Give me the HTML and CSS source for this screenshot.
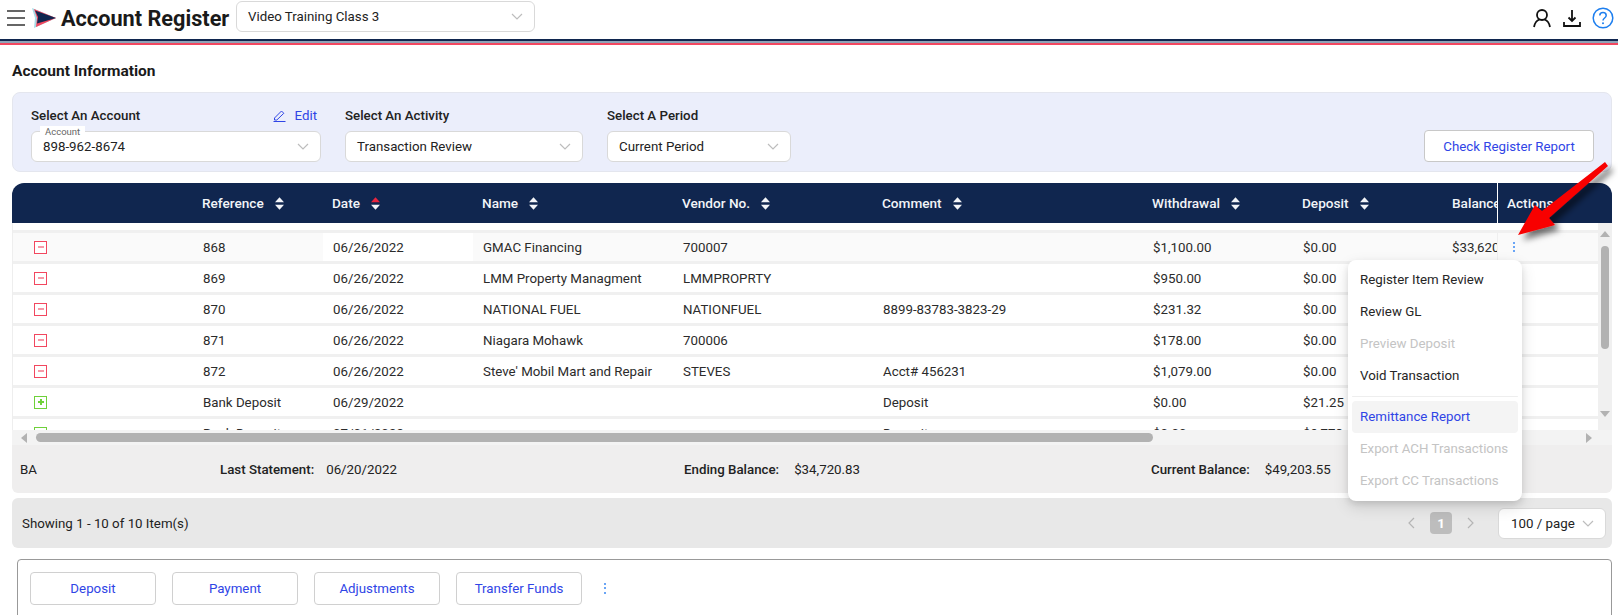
FILE: index.html
```html
<!DOCTYPE html>
<html lang="en">
<head>
<meta charset="utf-8">
<title>Account Register</title>
<link rel="stylesheet" href="styles.css">
</head>
<body>
<header class="topbar">
  <div class="burger"><span></span><span></span><span></span></div>
  <svg class="logo" viewBox="0 0 24 20" width="24" height="20">
    <path d="M0 0 L24 10 L2 20 L3 10 Z" fill="#a6dbe6"/>
    <path d="M2 1 L24 10 L4 19 L5 10 Z" fill="#f2475f"/>
    <path d="M3 2.500 L24 10 L5 15.500 L6 9 Z" fill="#10264f"/>
  </svg>
  <h1 class="title">Account Register</h1>
  <div class="select top-select"><span>Video Training Class 3</span><svg class="chev" viewBox="0 0 12 7"><path d="M1 1 L6 6 L11 1"/></svg></div>
  <div class="top-icons">
    <svg width="20" height="20" viewBox="0 0 20 20" class="ico-black"><circle cx="10" cy="7" r="5"/><path d="M2 19 C3 14 6 12 7.500 11.500 M18 19 C17 14 14 12 12.500 11.500"/></svg>
    <svg width="20" height="20" viewBox="0 0 20 20" class="ico-black"><path d="M10 2 V12 M6.500 9.500 L10 13 L13.500 9.500 M2 14 V18 H18 V14"/></svg>
    <svg width="22" height="22" viewBox="0 0 22 22" class="ico-help"><circle cx="11" cy="11" r="9.800"/><path d="M7.800 8.500 C7.800 4.500 14.200 4.500 14.200 8.500 C14.200 11 11 11 11 13.500"/><circle class="dot" cx="11" cy="16.300" r="1"/></svg>
  </div>
</header>
<div class="stripes"><i class="s1"></i><i class="s2"></i><i class="s3"></i></div>

<main class="page">
  <h2 class="section">Account Information</h2>

  <section class="filters">
    <div class="field f-account">
      <div class="lab-row"><label>Select An Account</label><a class="edit"><svg width="13" height="13" viewBox="0 0 13 13"><path d="M1.500 9 L8.500 2 L10.800 4.300 L3.800 11 H1.500 Z M0.500 12.500 H12.500"/></svg>Edit</a></div>
      <div class="select floated"><em>Account</em><span>898-962-8674</span><svg class="chev" viewBox="0 0 12 7"><path d="M1 1 L6 6 L11 1"/></svg></div>
    </div>
    <div class="field f-activity">
      <div class="lab-row"><label>Select An Activity</label></div>
      <div class="select"><span>Transaction Review</span><svg class="chev" viewBox="0 0 12 7"><path d="M1 1 L6 6 L11 1"/></svg></div>
    </div>
    <div class="field f-period">
      <div class="lab-row"><label>Select A Period</label></div>
      <div class="select"><span>Current Period</span><svg class="chev" viewBox="0 0 12 7"><path d="M1 1 L6 6 L11 1"/></svg></div>
    </div>
    <button class="btn report">Check Register Report</button>
  </section>

  <section class="table">
    <div class="thead cols">
      <div></div>
      <div class="th">Reference <svg class="sort" viewBox="0 0 10 14"><path d="M5 0 L10 5.500 H0 Z"/><path d="M5 14 L10 8.500 H0 Z"/></svg></div>
      <div class="th">Date <svg class="sort" viewBox="0 0 10 14"><path class="on" d="M5 0 L10 5.500 H0 Z"/><path d="M5 14 L10 8.500 H0 Z"/></svg></div>
      <div class="th">Name <svg class="sort" viewBox="0 0 10 14"><path d="M5 0 L10 5.500 H0 Z"/><path d="M5 14 L10 8.500 H0 Z"/></svg></div>
      <div class="th">Vendor No. <svg class="sort" viewBox="0 0 10 14"><path d="M5 0 L10 5.500 H0 Z"/><path d="M5 14 L10 8.500 H0 Z"/></svg></div>
      <div class="th">Comment <svg class="sort" viewBox="0 0 10 14"><path d="M5 0 L10 5.500 H0 Z"/><path d="M5 14 L10 8.500 H0 Z"/></svg></div>
      <div class="th">Withdrawal <svg class="sort" viewBox="0 0 10 14"><path d="M5 0 L10 5.500 H0 Z"/><path d="M5 14 L10 8.500 H0 Z"/></svg></div>
      <div class="th">Deposit <svg class="sort" viewBox="0 0 10 14"><path d="M5 0 L10 5.500 H0 Z"/><path d="M5 14 L10 8.500 H0 Z"/></svg></div>
      <div class="th clip">Balance</div>
      <div class="th act">Actions</div>
    </div>
    <div class="tbody-wrap">
      <div class="tbody">
        <div class="row cols hover">
          <div class="c-ico"><i class="flag minus"></i></div><div>868</div><div class="sorted">06/26/2022</div><div>GMAC Financing</div><div>700007</div><div></div><div>$1,100.00</div><div>$0.00</div><div class="clip">$33,620.55</div><div class="act"><span class="dots"><b></b><b></b><b></b></span></div>
        </div>
        <div class="row cols">
          <div class="c-ico"><i class="flag minus"></i></div><div>869</div><div>06/26/2022</div><div>LMM Property Managment</div><div>LMMPROPRTY</div><div></div><div>$950.00</div><div>$0.00</div><div class="act-filler"></div><div class="act"></div>
        </div>
        <div class="row cols">
          <div class="c-ico"><i class="flag minus"></i></div><div>870</div><div>06/26/2022</div><div>NATIONAL FUEL</div><div>NATIONFUEL</div><div>8899-83783-3823-29</div><div>$231.32</div><div>$0.00</div><div class="act-filler"></div><div class="act"></div>
        </div>
        <div class="row cols">
          <div class="c-ico"><i class="flag minus"></i></div><div>871</div><div>06/26/2022</div><div>Niagara Mohawk</div><div>700006</div><div></div><div>$178.00</div><div>$0.00</div><div class="act-filler"></div><div class="act"></div>
        </div>
        <div class="row cols">
          <div class="c-ico"><i class="flag minus"></i></div><div>872</div><div>06/26/2022</div><div>Steve' Mobil Mart and Repair</div><div>STEVES</div><div>Acct# 456231</div><div>$1,079.00</div><div>$0.00</div><div class="act-filler"></div><div class="act"></div>
        </div>
        <div class="row cols">
          <div class="c-ico"><i class="flag plus"></i></div><div>Bank Deposit</div><div>06/29/2022</div><div></div><div></div><div>Deposit</div><div>$0.00</div><div>$21.25</div><div class="act-filler"></div><div class="act"></div>
        </div>
        <div class="row cols">
          <div class="c-ico"><i class="flag plus"></i></div><div>Bank Deposit</div><div>07/01/2022</div><div></div><div></div><div>Deposit</div><div>$0.00</div><div>$9,773</div><div class="act-filler"></div><div class="act"></div>
        </div>
      </div>
      <div class="vscroll">
        <i class="arr up"></i>
        <i class="vthumb"></i>
        <i class="arr down"></i>
      </div>
    </div>
    <div class="hscroll">
      <i class="arr left"></i>
      <i class="hthumb"></i>
      <i class="arr right"></i>
    </div>
  </section>

  <section class="summary">
    <div class="s-ba">BA</div>
    <div class="s-last"><b>Last Statement:</b>06/20/2022</div>
    <div class="s-end"><b>Ending Balance:</b>$34,720.83</div>
    <div class="s-cur"><b>Current Balance:</b>$49,203.55</div>
  </section>

  <section class="pager">
    <span>Showing 1 - 10 of 10 Item(s)</span>
    <div class="pages">
      <svg class="pg" viewBox="0 0 7 12"><path d="M6 1 L1 6 L6 11"/></svg>
      <b class="cur">1</b>
      <svg class="pg" viewBox="0 0 7 12"><path d="M1 1 L6 6 L1 11"/></svg>
      <div class="select per"><span>100 / page</span><svg class="chev" viewBox="0 0 12 7"><path d="M1 1 L6 6 L11 1"/></svg></div>
    </div>
  </section>

  <section class="actions-box">
    <button class="btn act-btn">Deposit</button>
    <button class="btn act-btn">Payment</button>
    <button class="btn act-btn">Adjustments</button>
    <button class="btn act-btn">Transfer Funds</button>
    <span class="dots wide"><b></b><b></b><b></b></span>
  </section>
</main>

<ul class="menu">
  <li>Register Item Review</li>
  <li>Review GL</li>
  <li class="off">Preview Deposit</li>
  <li>Void Transaction</li>
  <li class="sep"></li>
  <li class="active">Remittance Report</li>
  <li class="off">Export ACH Transactions</li>
  <li class="off">Export CC Transactions</li>
</ul>

<svg class="callout" width="110" height="95" viewBox="0 0 110 95">
  <defs><filter id="sh" x="-20%" y="-20%" width="150%" height="150%"><feDropShadow dx="5" dy="5" stdDeviation="3" flood-color="#000" flood-opacity=".55"/></filter></defs>
  <path filter="url(#sh)" fill="#f80000" d="M92 5 L95 9 L36 61 L42 68 L5 78 L22 48 L29 54 Z"/>
</svg>
</body>
</html>
```
FILE: styles.css
```css
* { box-sizing: border-box; }
html, body { margin: 0; padding: 0; }
body {
  position: relative;
  width: 1618px;
  height: 615px;
  overflow: hidden;
  background: #fff;
  color: #222;
  font-family: Roboto, "Open Sans", sans-serif;
  font-size: 13.3px;
}
svg { display: block; flex: none; }

.topbar {
  display: flex;
  align-items: center;
  height: 39px;
  padding: 0 4px 3px 7px;
}
.burger { display: flex; flex-direction: column; gap: 5px; width: 18px; margin-right: 7px; }
.burger span { display: block; height: 2px; background: #666; }
.logo { margin-right: 5px; }
.title { margin: 0 7px 0 0; font-size: 21.700px; font-weight: 700; color: #1a1a1a; white-space: nowrap; width: 168px; }
.top-select { width: 299px; height: 31px; margin-top: -3px; padding: 0 12px; }
.top-icons { display: flex; align-items: center; gap: 10px; margin-left: auto; }
.ico-black { fill: none; stroke: #111; stroke-width: 1.800; }
.ico-help { fill: none; stroke: #1e7fef; stroke-width: 1.500; }
.ico-help .dot { fill: #1e7fef; stroke: none; }

.stripes { display: flex; flex-direction: column; }
.stripes i { display: block; height: 2px; }
.s1 { background: #10264f; }
.s2 { background: #8fa4b8; }
.s3 { background: #f2475f; }

.page { padding: 0 6px 0 12px; }
.section { margin: 16px 0 11px; font-size: 15.500px; font-weight: 700; color: #1a1a1a; line-height: 20px; }

.select {
  position: relative;
  display: flex;
  align-items: center;
  justify-content: space-between;
  height: 31px;
  padding: 0 11px;
  background: #fff;
  border: 1px solid #d9d9d9;
  border-radius: 6px;
}
.chev { width: 12px; height: 7px; fill: none; stroke: #bdbdbd; stroke-width: 1.200; }
.floated em {
  position: absolute;
  left: 8px;
  top: -6px;
  padding: 0 5px;
  background: #fff;
  font-style: normal;
  font-size: 9.500px;
  line-height: 11px;
  color: #666;
}

.filters {
  display: flex;
  align-items: flex-start;
  height: 80px;
  padding: 12px 17px 0 18px;
  background: #ebeefb;
  border: 1px solid #e4e6ee;
  border-radius: 8px;
}
.lab-row { display: flex; justify-content: space-between; align-items: center; height: 20px; margin-bottom: 6px; }
.lab-row label { font-weight: 500; color: #222; }
.edit { display: flex; align-items: center; gap: 8px; color: #2f45e6; padding-right: 4px; }
.edit svg { fill: none; stroke: #2f45e6; stroke-width: 1; }
.f-account { width: 290px; margin-right: 24px; }
.f-activity { width: 238px; margin-right: 24px; }
.f-period { width: 184px; }
.btn {
  font: inherit;
  color: #2f45e6;
  background: #fff;
  border: 1px solid #c8c8c8;
  border-radius: 4px;
  cursor: pointer;
}
.report { width: 170px; height: 32px; margin: 25px 0 0 auto; }

.cols {
  display: grid;
  grid-template-columns: 181px 130px 150px 200px 200px 270px 150px 149px 55px 1fr;
}
.table { margin-top: 11px; }
.thead {
  height: 40px;
  align-items: stretch;
  background: #10264f;
  border-radius: 12px 12px 0 0;
  color: #f2f4f8;
  font-size: 13.600px;
  font-weight: 500;
}
.th { display: flex; align-items: center; gap: 11px; padding-left: 9px; white-space: nowrap; }
.thead .clip { overflow: hidden; padding-left: 10px; }
.thead .act { border-left: 1px solid #fff; padding-left: 9px; }
.sort { width: 9px; height: 13px; fill: #f2f4f8; }
.sort .on { fill: #e8263f; }

.tbody-wrap { display: flex; height: 207px; background: #f0f0f0; border-left: 1px solid #eee; }
.tbody { flex: 1; min-width: 0; overflow: hidden; display: flex; flex-direction: column; gap: 3px; padding-top: 10px; background: #f0f0f0; box-shadow: inset 0 7px 0 #fff; }
.row { flex: none; height: 28px; align-items: stretch; background: #fff; grid-template-columns: 180px 130px 150px 200px 200px 270px 150px 149px 55px 1fr; }
.row > div { display: flex; align-items: center; padding-left: 10px; white-space: nowrap; color: #2b2b2b; }
.row .clip { overflow: hidden; }
.hover { background: #fafafa; }
.row .sorted { background: #fff; }
.row .c-ico { padding-left: 21px; }
.flag {
  position: relative;
  display: block;
  width: 13px;
  height: 13px;
  border: 1px solid;
  background: #fff;
  box-shadow: 0 0 0 .5px rgba(255,255,255,.5);
}
.flag::before { content: ""; position: absolute; left: 2.500px; right: 2.500px; top: 4.500px; height: 2px; }
.minus { border-color: #f2475f; }
.minus::before { background: #f79aa8; }
.plus { border-color: #6fd13a; }
.plus::before { background: #6fd13a; }
.plus::after { content: ""; position: absolute; top: 2.500px; bottom: 2.500px; left: 4.500px; width: 2px; background: #6fd13a; }

.row .act { position: relative; border-left: 1px solid #efefef; padding-left: 15px; }
.dots { display: inline-flex; flex-direction: column; gap: 2px; width: 2px; }
.dots b { display: block; width: 2px; height: 2px; background: #6aa5f5; }
.dots.wide { margin-left: 6px; gap: 2.500px; }

.vscroll { position: relative; flex: none; width: 14px; background: #f0f0f0; display: flex; flex-direction: column; align-items: center; padding-top: 8px; }
.vthumb { display: block; width: 8px; height: 103px; margin-top: 9px; background: #b2b2b2; border-radius: 4px; }
.arr { display: block; width: 0; height: 0; border: 5px solid transparent; }
.up { border-top: 0; border-bottom: 6px solid #b2b2b2; }
.down { border-bottom: 0; border-top: 6px solid #b2b2b2; margin-top: 62px; }
.hscroll { display: flex; align-items: center; height: 15px; padding: 0 20px 0 9px; background: #f3f3f3; }
.hthumb { display: block; width: 1117px; height: 9px; margin-left: 9px; background: #b2b2b2; border-radius: 5px; }
.left { border-left: 0; border-right: 6px solid #b2b2b2; }
.right { border-right: 0; border-left: 6px solid #b2b2b2; margin-left: auto; }

.summary {
  display: grid;
  grid-template-columns: 200px 464px 467px 1fr;
  align-items: center;
  height: 48px;
  padding-left: 8px;
  background: #efeeee;
  border-radius: 0 0 6px 6px;
}
.summary b { font-weight: 500; margin-right: 12px; }
.summary .s-end b, .summary .s-cur b { margin-right: 15px; }
.pager {
  display: flex;
  align-items: center;
  justify-content: space-between;
  height: 50px;
  margin-top: 5px;
  padding: 0 6px 0 10px;
  background: #e8e8e8;
  border-radius: 6px;
}
.pages { display: flex; align-items: center; }
.pg { width: 7px; height: 12px; fill: none; stroke: #b5b5b5; stroke-width: 1.200; }
.cur {
  display: flex;
  align-items: center;
  justify-content: center;
  width: 22px;
  height: 22px;
  margin: 0 15px;
  background: #bdbdbd;
  border-radius: 4px;
  color: #fff;
  font-weight: 700;
}
.per { width: 108px; height: 31px; margin-left: 24px; padding: 0 11px 0 12px; }

.actions-box {
  display: flex;
  align-items: center;
  gap: 16px;
  height: 70px;
  margin: 11px 0 0 5px;
  padding: 0 0 12px 12px;
  border: 1px solid #999;
  border-radius: 4px 4px 0 0;
}
.act-btn { width: 126px; height: 33px; border-color: #d0d0d0; border-width: 1.500px; }

.menu {
  position: absolute;
  left: 1348px;
  top: 260px;
  width: 174px;
  margin: 0;
  padding: 4px;
  list-style: none;
  background: #fff;
  border-radius: 8px;
  box-shadow: 0 6px 16px rgba(0,0,0,.12), 0 3px 6px rgba(0,0,0,.1);
}
.menu li { height: 32px; padding: 0 8px; line-height: 32px; color: #262626; border-radius: 4px; white-space: nowrap; }
.menu li.off { color: #c4c4c4; }
.menu li.sep { height: 1px; margin: 4px 0; padding: 0; background: #eee; }
.menu li.active { color: #2f45e6; background: #f4f4f4; }

.callout { position: absolute; left: 1513px; top: 157px; pointer-events: none; }
```
